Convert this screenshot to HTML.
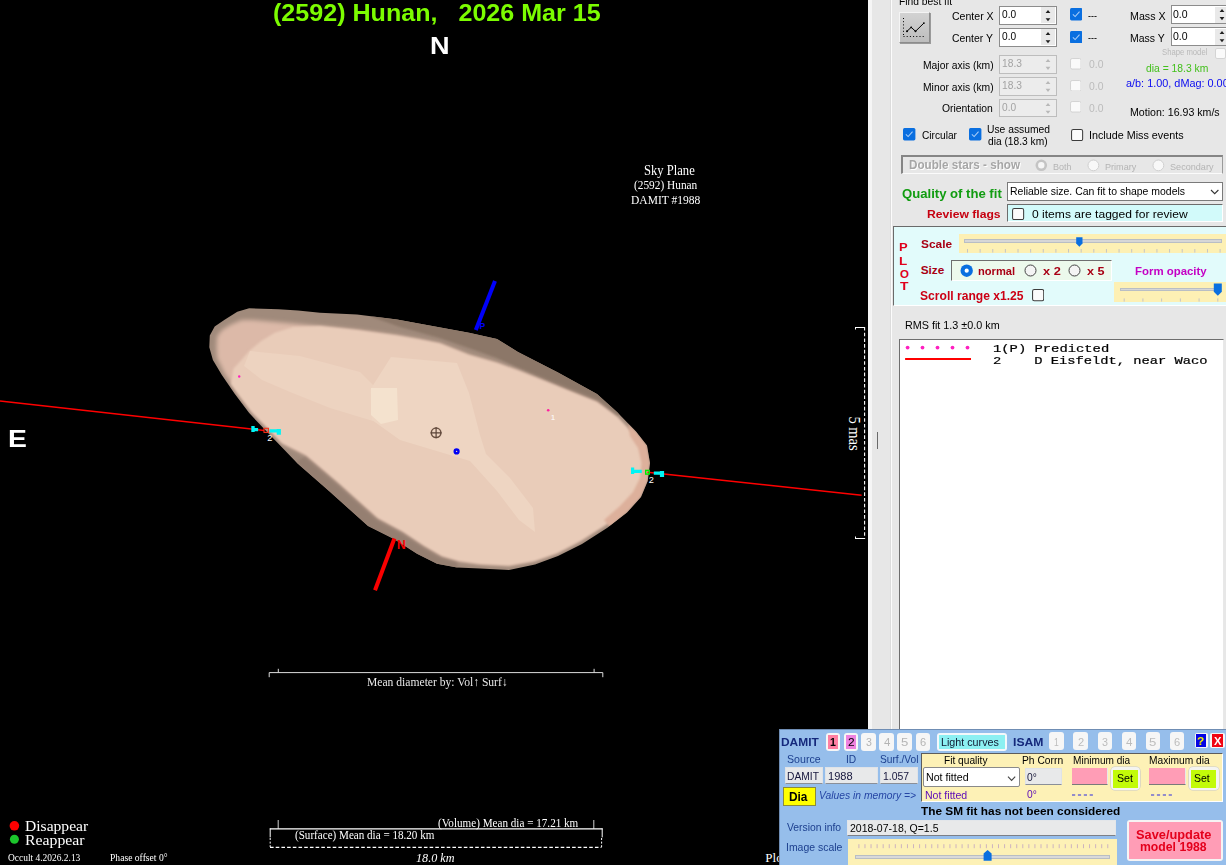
<!DOCTYPE html>
<html>
<head>
<meta charset="utf-8">
<title>Occult - (2592) Hunan</title>
<style>
html,body{margin:0;padding:0;}
body{width:1226px;height:865px;overflow:hidden;position:relative;background:#000;font-family:"Liberation Sans",sans-serif;font-size:12px;color:#000;}
.a{position:absolute;white-space:nowrap;line-height:1;}
.t{position:absolute;white-space:pre;line-height:1;transform-origin:0 50%;}
#plot{position:absolute;left:0;top:0;width:868px;height:865px;background:#000;overflow:hidden;}
#side{position:absolute;left:868px;top:0;width:358px;height:865px;background:#e7e7e7;overflow:hidden;}
#dm{position:absolute;left:779px;top:729px;width:447px;height:136px;background:#96beeb;overflow:hidden;}
.serif{font-family:"Liberation Serif",serif;color:#fff;}
</style>
</head>
<body>

<!-- ================= PLOT AREA ================= -->
<div id="plot">
<svg class="a" style="left:0;top:0" width="868" height="865" viewBox="0 0 868 865">
  <defs>
    <filter id="bl" x="-5%" y="-5%" width="110%" height="110%"><feGaussianBlur stdDeviation="1.2"/></filter>
    <filter id="bl2" x="-5%" y="-5%" width="110%" height="110%"><feGaussianBlur stdDeviation="2"/></filter>
    <clipPath id="cp"><polygon points="209.3,347.2 209.8,335.4 214.7,326.5 224.6,319.7 237.3,311.8 249.1,308.2 278.6,309.3 298,310.6 320,312.8 357,314.6 397,319.5 420,323.8 469,332.8 497,339 518,352 558,372.6 597,394 617,412 636,431.5 647,445.5 650,463 647.7,481 641,497 627,512.6 607,528 582,544 558,556 535,564.6 509,570 480,568.6 457,567.6 437,563.7 417,553.8 394,539 368,526 348.5,508.6 329,491 297.5,463.4 279.7,445 264,428.8 249.2,413.1 234.5,393.4 221.7,374.7 212.9,360"/></clipPath>
  </defs>
  <!-- asteroid outer (rim) -->
  <polygon id="rim" fill="#a08a7b" points="209.3,347.2 209.8,335.4 214.7,326.5 224.6,319.7 237.3,311.8 249.1,308.2 278.6,309.3 298,310.6 320,312.8 357,314.6 397,319.5 420,323.8 469,332.8 497,339 518,352 558,372.6 597,394 617,412 636,431.5 647,445.5 650,463 647.7,481 641,497 627,512.6 607,528 582,544 558,556 535,564.6 509,570 480,568.6 457,567.6 437,563.7 417,553.8 394,539 368,526 348.5,508.6 329,491 297.5,463.4 279.7,445 264,428.8 249.2,413.1 234.5,393.4 221.7,374.7 212.9,360"/>
  <g clip-path="url(#cp)">
  <!-- darker top-right rim -->
  <polygon fill="#8c7768" filter="url(#bl)" points="372,315 400,316 430,320 469,330 497,336 518,349 558,370 597,391 622,412 612,421 590,403 556,385 518,368 497,358 469,348 440,338 400,327 372,317"/>
  <!-- darker lower-left rim -->
  <polygon fill="#957f71" filter="url(#bl)" points="296,462 329,492 348.5,510 368,527 394,540.5 417,555 437,565 457,569 458,559 441,553.5 423,543.5 402,529.5 377,516 358,499 338,481 309,454"/>
  <!-- medium layer (upper-left wedge etc) -->
  <polygon fill="#dcb9a8" filter="url(#bl2)" points="216.5,347 217,336.5 222,330 231,324.5 242,320 253,320 298,324 357,330 397,335.5 420,339.5 440,343.5 469,355 497,363 518,370.6 558,386.6 597,402 617,417 633,434 642,449 645,465 643,481 637,495 624,510 605,525 580,541 557,553 534,561 509,565.5 480,564 459,561 442,556 424,545.5 403,531.5 378,518 359,501 339,483 306,455 282,443 266.5,426.8 251.5,411.5 237,392.3 224.5,373.5 217,358"/>
  <!-- light body -->
  <polygon fill="#e9ccb9" filter="url(#bl)" points="320,326 357,330 397,335.5 420,339.5 440,343.5 469,355 497,363 518,370.6 558,386.6 597,402 617,417 633,434 642,449 645,465 643,481 637,495 624,510 605,525 580,541 557,553 534,561 509,565.5 480,564 459,561 442,556 424,545.5 403,531.5 378,518 359,501 339,483 306,455 282,443 266.5,426.8 251.5,411.5 237,392.3 231,384 233.4,368.8 242.3,359 249.1,351.1 260.9,341.3 274.7,332.8 293.4,327"/>
  <!-- right salmon rim -->
  <polygon fill="#ddb09b" filter="url(#bl)" points="628,424 636,431.5 647,445.5 650,463 647.7,481 641,497 627,512.6 610,527 604,520 620,506 633,492 640,478 641.5,463 638,448 630,436"/>
  <!-- lighter bands -->
  <polygon fill="#edd3c0" points="250,351 300,356 360,372 375,387 373,421 330,408 290,392 262,380 244,366"/>
  <polygon fill="#eed5c2" points="391,357 457,363 469,393 480,435 486,454 510,478 533,508 535,532 519,520 497,491 470,461 440,452 400,440 372,420 370,390"/>
  <!-- bright patch -->
  <polygon fill="#f4e2ce" points="371,388 397,388 398,420 381,424 371,415"/>
  </g>
  <!-- chord lines -->
  <line x1="0" y1="401.1" x2="264" y2="430.4" stroke="#f00" stroke-width="1.5"/>
  <line x1="647.5" y1="472.2" x2="861.6" y2="495.2" stroke="#f00" stroke-width="1.5"/>
  <!-- blue arrow (rotation pole) -->
  <line x1="495" y1="281" x2="475.8" y2="329.9" stroke="#0000fa" stroke-width="4"/>
  <text x="479.6" y="329.4" font-family="Liberation Sans, sans-serif" font-size="8.5" font-weight="bold" fill="#0000fa">P</text>
  <!-- red arrow -->
  <line x1="394.4" y1="538.5" x2="375" y2="590.3" stroke="#fa0000" stroke-width="4"/>
  <text x="397" y="549.4" font-family="Liberation Sans, sans-serif" font-size="12" font-weight="bold" fill="#fa0000">N</text>
  <!-- center crosshair -->
  <circle cx="436.1" cy="432.8" r="4.8" fill="none" stroke="#6b5243" stroke-width="1.5"/>
  <path d="M430.6 432.8 h11 M436.1 427.3 v11" stroke="#5b4438" stroke-width="1.2"/>
  <!-- centre of mass dot -->
  <circle cx="456.6" cy="451.4" r="1.9" fill="none" stroke="#0000f4" stroke-width="2.4"/>
  <!-- predicted dots -->
  <circle cx="239.2" cy="376.5" r="1.2" fill="#ff20c0"/>
  <circle cx="548.2" cy="410.3" r="1.3" fill="#ff20a0"/>
  <text x="550.8" y="420" font-family="Liberation Sans, sans-serif" font-size="8" fill="#fff">1</text>
  <!-- left chord end markers -->
  <path d="M251.3 426 h3.4 v2 h3.4 v3.2 h-3.4 v0.9 h-3.4 z" fill="#00f4f4"/>
  <path d="M269.6 429.2 h7.1 v-0.2 h4.2 v5.8 h-4.2 v-2.2 h-7.1 z" fill="#00f4f4"/>
  <rect x="264" y="428.3" width="4.4" height="4.1" fill="none" stroke="#f83018" stroke-width="1.1"/>
  <text x="267.2" y="440.9" font-family="Liberation Sans, sans-serif" font-size="9.2" fill="#fff">2</text>
  <!-- right chord end markers -->
  <path d="M631 467.5 h3.2 v2.2 h7.6 v3.4 h-7.6 v1 h-3.2 z" fill="#00f4f4"/>
  <path d="M653.8 471.6 h6.1 v-0.7 h4.2 v6.1 h-4.2 v-2.2 h-6.1 z" fill="#00f4f4"/>
  <rect x="645.7" y="470.4" width="3.6" height="3.7" fill="none" stroke="#00ee00" stroke-width="1.4"/>
  <text x="648.7" y="482.9" font-family="Liberation Sans, sans-serif" font-size="9.2" fill="#fff">2</text>
  <!-- 5 mas scale bar -->
  <path d="M855 327.5 h9.5 M855.5 327 v2.5 M855 538.5 h9.5 M855.5 536.5 v2.5" stroke="#fff" stroke-width="1" fill="none"/>
  <path d="M864.6 327 v212" stroke="#fff" stroke-width="1.1" stroke-dasharray="3.6 2.1"/>
  <text transform="translate(848.8,416.4) rotate(90) scale(0.875,1)" font-family="Liberation Serif, serif" font-size="16.6" fill="#fff">5 mas</text>
  <!-- mean diameter bar -->
  <path d="M269.2 677.2 v-4.6 h333.6 v4.6" stroke="#dcdcdc" stroke-width="1" fill="none"/>
  <path d="M278.3 672.6 v-3.8 M594.1 672.6 v-3.8" stroke="#dcdcdc" stroke-width="1"/>
  <!-- bottom bars -->
  <path d="M278.2 820 v8.8 M593.8 820 v8.8" stroke="#d0d0d0" stroke-width="1"/>
  <path d="M269.8 828.9 h332.8" stroke="#fff" stroke-width="1.1"/>
  <path d="M270.2 828.4 v9 M602.2 828.4 v9" stroke="#fff" stroke-width="1"/>
  <path d="M270.2 838 v9 M601.6 838 v9" stroke="#fff" stroke-width="1" stroke-dasharray="2 1.6"/>
  <path d="M270 847.4 h331.5" stroke="#fff" stroke-width="1.1" stroke-dasharray="3.6 2.1"/>
  <!-- legend dots -->
  <circle cx="14.4" cy="825.8" r="4.8" fill="#ff0000"/>
  <circle cx="14.4" cy="839.3" r="4.5" fill="#1cc62c"/>
</svg>
<div class="t" style="left:272.5px;top:2px;font-size:23.2px;font-weight:bold;color:#7cfc00;white-space:pre;transform:scaleX(1.082);">(2592) Hunan,   2026 Mar 15</div>
<div class="t" style="left:429.5px;top:34.5px;font-size:23px;font-weight:bold;color:#fff;transform:scaleX(1.18);">N</div>
<div class="t" style="left:7.5px;top:427.4px;font-size:24.6px;font-weight:bold;color:#fff;transform:scaleX(1.15);">E</div>
<!--PT-BEGIN-->
<div class="t" style="left:644.37px;top:164.11px;font-size:13.6px;font-family:'Liberation Serif',serif;color:#fff;transform:scaleX(0.9264);">Sky Plane</div>
<div class="t" style="left:634.30px;top:178.85px;font-size:12.6px;font-family:'Liberation Serif',serif;color:#fff;transform:scaleX(0.9000);">(2592) Hunan</div>
<div class="t" style="left:630.60px;top:193.98px;font-size:12.8px;font-family:'Liberation Serif',serif;color:#fff;transform:scaleX(0.9000);">DAMIT #1988</div>
<div class="t" style="left:366.73px;top:676.15px;font-size:12px;font-family:'Liberation Serif',serif;color:#e8e8e8;transform:scaleX(0.9664);">Mean diameter by: Vol↑ Surf↓</div>
<div class="t" style="left:25.20px;top:818.81px;font-size:14.2px;font-family:'Liberation Serif',serif;color:#fff;transform:scaleX(1.0982);">Disappear</div>
<div class="t" style="left:25.19px;top:832.61px;font-size:14.2px;font-family:'Liberation Serif',serif;color:#fff;transform:scaleX(1.1113);">Reappear</div>
<div class="t" style="left:7.50px;top:852.44px;font-size:10.7px;font-family:'Liberation Serif',serif;color:#fff;transform:scaleX(0.8829);">Occult 4.2026.2.13</div>
<div class="t" style="left:110.20px;top:852.44px;font-size:10.7px;font-family:'Liberation Serif',serif;color:#fff;transform:scaleX(0.8984);">Phase offset 0°</div>
<div class="t" style="left:438.10px;top:816.55px;font-size:12px;font-family:'Liberation Serif',serif;color:#fff;transform:scaleX(0.9278);">(Volume) Mean dia = 17.21 km</div>
<div class="t" style="left:295.40px;top:829.25px;font-size:12px;font-family:'Liberation Serif',serif;color:#fff;transform:scaleX(0.9245);">(Surface) Mean dia = 18.20 km</div>
<div class="t" style="left:416.46px;top:850.91px;font-size:13px;font-family:'Liberation Serif',serif;font-style:italic;color:#fff;transform:scaleX(0.9350);">18.0 km</div>
<div class="t" style="left:765.30px;top:850.91px;font-size:13px;font-family:'Liberation Serif',serif;color:#fff;transform:scaleX(1.0000);">Plot</div>
<!--PT-END-->
</div>

<!-- ================= SIDE PANEL ================= -->
<div id="side"></div>
<!--SIDE-BEGIN-->
<div class="a" style="left:868px;top:0px;width:3.5px;height:865.0px;background:#f6f6f6;"></div>
<div class="a" style="left:876.5px;top:432px;width:1.0px;height:17.0px;background:#6a6a6a;"></div>
<div class="a" style="left:890px;top:0px;width:1.0px;height:865.0px;background:#dcdcdc;"></div>
<div class="a" style="left:891px;top:0px;width:1.0px;height:865.0px;background:#fcfcfc;"></div>
<div class="a" style="left:898.6px;top:11.8px;width:31.8px;height:31.2px;background:linear-gradient(180deg,#d2d2d2,#bdbdbd);border:1px solid;border-color:#f4f4f4 #8c8c8c #8c8c8c #f4f4f4;box-sizing:border-box;box-shadow:1px 1px 0 #9a9a9a;"></div>
<svg class="a" style="left:898px;top:11px" width="33" height="32" viewBox="0 0 33 32">
<path d="M5.5 7 v19 M5.5 25.5 h22" stroke="#000" stroke-width="1" stroke-dasharray="1 2.2" fill="none"/>
<path d="M9 20.3 l4.2 -4 l4.3 4 l8.4 -8.2" stroke="#000" stroke-width="1" fill="none"/>
<circle cx="9" cy="20.3" r="1"/><circle cx="13.2" cy="16.3" r="0.9"/><circle cx="17.5" cy="20.3" r="1"/><circle cx="25.9" cy="12.1" r="0.9"/>
</svg>
<div class="a" style="left:999.3px;top:5.5px;width:57.4px;height:19.1px;background:#fff;border:1px solid #8c8c8c;box-sizing:border-box;"></div>
<div class="a" style="left:1041.2px;top:7.0px;width:14.0px;height:16.1px;background:#e9e9e9;"></div>
<svg class="a" style="left:1041.2px;top:5.5px" width="14" height="19.1" viewBox="0 0 14 19.1"><path d="M4.6 7 L7 3.9 L9.4 7 Z M4.6 12.2 L7 15.3 L9.4 12.2 Z" fill="#202020"/></svg>
<div class="a" style="left:999.3px;top:27.5px;width:57.4px;height:19.1px;background:#fff;border:1px solid #8c8c8c;box-sizing:border-box;"></div>
<div class="a" style="left:1041.2px;top:29.0px;width:14.0px;height:16.1px;background:#e9e9e9;"></div>
<svg class="a" style="left:1041.2px;top:27.5px" width="14" height="19.1" viewBox="0 0 14 19.1"><path d="M4.6 7 L7 3.9 L9.4 7 Z M4.6 12.2 L7 15.3 L9.4 12.2 Z" fill="#202020"/></svg>
<div class="a" style="left:999.3px;top:55px;width:57.4px;height:18.7px;background:#ececec;border:1px solid #bdbdbd;box-sizing:border-box;"></div>
<svg class="a" style="left:1041.2px;top:55px" width="14" height="18.7" viewBox="0 0 14 18.7"><path d="M4.6 7 L7 3.9 L9.4 7 Z M4.6 11.8 L7 14.9 L9.4 11.8 Z" fill="#b8b8b8"/></svg>
<div class="a" style="left:999.3px;top:77px;width:57.4px;height:18.7px;background:#ececec;border:1px solid #bdbdbd;box-sizing:border-box;"></div>
<svg class="a" style="left:1041.2px;top:77px" width="14" height="18.7" viewBox="0 0 14 18.7"><path d="M4.6 7 L7 3.9 L9.4 7 Z M4.6 11.8 L7 14.9 L9.4 11.8 Z" fill="#b8b8b8"/></svg>
<div class="a" style="left:999.3px;top:98.9px;width:57.4px;height:18.6px;background:#ececec;border:1px solid #bdbdbd;box-sizing:border-box;"></div>
<svg class="a" style="left:1041.2px;top:98.9px" width="14" height="18.6" viewBox="0 0 14 18.6"><path d="M4.6 7 L7 3.9 L9.4 7 Z M4.6 11.7 L7 14.8 L9.4 11.7 Z" fill="#b8b8b8"/></svg>
<div class="a" style="left:1170.9px;top:5.4px;width:59.1px;height:19.0px;background:#fff;border:1px solid #8c8c8c;box-sizing:border-box;"></div>
<div class="a" style="left:1214.5px;top:6.9px;width:14.0px;height:16.0px;background:#e9e9e9;"></div>
<svg class="a" style="left:1214.5px;top:5.4px" width="14" height="19.0" viewBox="0 0 14 19.0"><path d="M4.6 7 L7 3.9 L9.4 7 Z M4.6 12.1 L7 15.2 L9.4 12.1 Z" fill="#202020"/></svg>
<div class="a" style="left:1170.9px;top:27.2px;width:59.1px;height:19.1px;background:#fff;border:1px solid #8c8c8c;box-sizing:border-box;"></div>
<div class="a" style="left:1214.5px;top:28.7px;width:14.0px;height:16.1px;background:#e9e9e9;"></div>
<svg class="a" style="left:1214.5px;top:27.2px" width="14" height="19.1" viewBox="0 0 14 19.1"><path d="M4.6 7 L7 3.9 L9.4 7 Z M4.6 12.2 L7 15.3 L9.4 12.2 Z" fill="#202020"/></svg>
<svg class="a" style="left:1069.5px;top:8.3px" width="12.4" height="12.4" viewBox="0 0 13 13"><rect x="0" y="0" width="13" height="13" rx="1.6" fill="#0a6fe0"/><path d="M3 6.7 L5.4 9 L10 3.8" stroke="#a9cdf8" stroke-width="1.1" fill="none"/></svg>
<svg class="a" style="left:1069.5px;top:30.5px" width="12.4" height="12.4" viewBox="0 0 13 13"><rect x="0" y="0" width="13" height="13" rx="1.6" fill="#0a6fe0"/><path d="M3 6.7 L5.4 9 L10 3.8" stroke="#a9cdf8" stroke-width="1.1" fill="none"/></svg>
<svg class="a" style="left:1069.6px;top:58.2px" width="11.6" height="11.6" viewBox="0 0 13 13"><rect x="0.6" y="0.6" width="11.8" height="11.8" rx="1.8" fill="#fafafa" stroke="#d2d2d2" stroke-width="1.1"/></svg>
<svg class="a" style="left:1069.6px;top:79.8px" width="11.6" height="11.6" viewBox="0 0 13 13"><rect x="0.6" y="0.6" width="11.8" height="11.8" rx="1.8" fill="#fafafa" stroke="#d2d2d2" stroke-width="1.1"/></svg>
<svg class="a" style="left:1069.6px;top:101.4px" width="11.6" height="11.6" viewBox="0 0 13 13"><rect x="0.6" y="0.6" width="11.8" height="11.8" rx="1.8" fill="#fafafa" stroke="#d2d2d2" stroke-width="1.1"/></svg>
<svg class="a" style="left:1215.2px;top:48.1px" width="11" height="11" viewBox="0 0 13 13"><rect x="0.6" y="0.6" width="11.8" height="11.8" rx="1.8" fill="#fafafa" stroke="#d2d2d2" stroke-width="1.1"/></svg>
<svg class="a" style="left:903.4px;top:128.2px" width="12.4" height="12.4" viewBox="0 0 13 13"><rect x="0" y="0" width="13" height="13" rx="1.6" fill="#0a6fe0"/><path d="M3 6.7 L5.4 9 L10 3.8" stroke="#a9cdf8" stroke-width="1.1" fill="none"/></svg>
<svg class="a" style="left:969.2px;top:128.2px" width="12.4" height="12.4" viewBox="0 0 13 13"><rect x="0" y="0" width="13" height="13" rx="1.6" fill="#0a6fe0"/><path d="M3 6.7 L5.4 9 L10 3.8" stroke="#a9cdf8" stroke-width="1.1" fill="none"/></svg>
<svg class="a" style="left:1071.4px;top:128.5px" width="12.2" height="12.2" viewBox="0 0 13 13"><rect x="0.6" y="0.6" width="11.8" height="11.8" rx="1.8" fill="#fbfbfb" stroke="#3c3c3c" stroke-width="1.1"/></svg>
<div class="a" style="left:901.4px;top:155.3px;width:321.6px;height:18.7px;border:2px solid;border-color:#858585 #9a9a9a #fbfbfb #858585;border-right-width:1px;border-bottom-width:1px;box-sizing:border-box;"></div>
<svg class="a" style="left:1035.1000000000001px;top:159.1px" width="12.6" height="12.6" viewBox="0 0 12.6 12.6"><circle cx="6.3" cy="6.3" r="4.5" fill="#f6f6f6" stroke="#c4c4c4" stroke-width="2.6"/></svg>
<svg class="a" style="left:1086.8999999999999px;top:158.9px" width="12.8" height="12.8" viewBox="0 0 12.8 12.8"><circle cx="6.4" cy="6.4" r="5.4" fill="#f8f8f8" stroke="#cfcfcf" stroke-width="1"/></svg>
<svg class="a" style="left:1152.1px;top:158.9px" width="12.8" height="12.8" viewBox="0 0 12.8 12.8"><circle cx="6.4" cy="6.4" r="5.4" fill="#f8f8f8" stroke="#cfcfcf" stroke-width="1"/></svg>
<div class="a" style="left:1007px;top:181.8px;width:216.4px;height:19.4px;background:#fff;border:1px solid #7a7a7a;box-sizing:border-box;"></div>
<svg class="a" style="left:1209px;top:187px" width="12" height="10" viewBox="0 0 12 10"><path d="M2 3 L5.7 6.7 L9.4 3" stroke="#333" stroke-width="1.1" fill="none"/></svg>
<div class="a" style="left:1007.4px;top:204px;width:215.6px;height:18.2px;background:#d2fafa;border-top:1.6px solid #6c6c6c;border-left:1.8px solid #6c6c6c;border-bottom:1px solid #fff;border-right:1px solid #fff;box-sizing:border-box;"></div>
<div class="a" style="left:893px;top:225.7px;width:337.0px;height:80.7px;background:#e2fbfb;border-top:1.6px solid #6a6a6a;border-left:1.8px solid #6a6a6a;border-bottom:1px solid #fff;box-sizing:border-box;"></div>
<div class="a" style="left:958.8px;top:234.2px;width:267.2px;height:18.4px;background:#fdf0b4;"></div>
<div class="a" style="left:964.3px;top:239.4px;width:257.7px;height:3.6px;background:#d6d6d6;border:0.7px solid #b9bec4;box-sizing:border-box;"></div>
<svg class="a" style="left:958.8px;top:234.2px" width="267" height="19" viewBox="0 0 267 19"><path d="M8.50 15 v3.6 M21.13 15 v3.6 M33.76 15 v3.6 M46.39 15 v3.6 M59.02 15 v3.6 M71.65 15 v3.6 M84.28 15 v3.6 M96.91 15 v3.6 M109.54 15 v3.6 M122.17 15 v3.6 M134.80 15 v3.6 M147.43 15 v3.6 M160.06 15 v3.6 M172.69 15 v3.6 M185.32 15 v3.6 M197.95 15 v3.6 M210.58 15 v3.6 M223.21 15 v3.6 M235.84 15 v3.6 M248.47 15 v3.6 M261.10 15 v3.6 " stroke="#c4c4c4" stroke-width="1"/><path d="M117.2 3.2 h6.3 v6.4 l-3.15 3.1 l-3.15 -3.1 z" fill="#0a6fe0"/></svg>
<div class="a" style="left:950.6px;top:260.2px;width:161.7px;height:21.1px;background:#ecf9ec;border:1.6px solid;border-color:#6e6e6e #fff #fff #6e6e6e;box-sizing:border-box;"></div>
<svg class="a" style="left:959.6999999999999px;top:263.90000000000003px" width="13.4" height="13.4" viewBox="0 0 13.4 13.4"><circle cx="6.7" cy="6.7" r="6.2" fill="#0a6fe0"/><circle cx="6.7" cy="6.7" r="2.1" fill="#fff"/></svg>
<svg class="a" style="left:1024.0px;top:264.1px" width="13" height="13" viewBox="0 0 13 13"><circle cx="6.5" cy="6.5" r="5.5" fill="#f4f4f4" stroke="#444" stroke-width="1"/></svg>
<svg class="a" style="left:1067.9px;top:264.1px" width="13" height="13" viewBox="0 0 13 13"><circle cx="6.5" cy="6.5" r="5.5" fill="#f4f4f4" stroke="#444" stroke-width="1"/></svg>
<div class="a" style="left:1114.3px;top:282.4px;width:111.7px;height:19.9px;background:#fdf0b4;"></div>
<div class="a" style="left:1120px;top:288.2px;width:96.0px;height:3.3px;background:#d6d6d6;border:0.7px solid #b9bec4;box-sizing:border-box;"></div>
<svg class="a" style="left:1114.3px;top:282.4px" width="112" height="20" viewBox="0 0 112 20"><path d="M10.20 16.4 v3.2 M28.92 16.4 v3.2 M47.64 16.4 v3.2 M66.36 16.4 v3.2 M85.08 16.4 v3.2 M103.80 16.4 v3.2 " stroke="#c4c4c4" stroke-width="1"/><path d="M99.8 1.4 h8 v8.4 l-4 4 l-4 -4 z" fill="#0a6fe0"/></svg>
<svg class="a" style="left:1012.4px;top:207.6px" width="12.2" height="12.2" viewBox="0 0 13 13"><rect x="0.6" y="0.6" width="11.8" height="11.8" rx="1.8" fill="#fbfbfb" stroke="#3c3c3c" stroke-width="1.1"/></svg>
<svg class="a" style="left:1032.1px;top:289.4px" width="12.3" height="12.3" viewBox="0 0 13 13"><rect x="0.6" y="0.6" width="11.8" height="11.8" rx="1.8" fill="#fbfbfb" stroke="#3c3c3c" stroke-width="1.1"/></svg>
<div class="a" style="left:898.7px;top:339.2px;width:325.7px;height:389.8px;background:#fff;border-top:1.8px solid #6e6e6e;border-left:1.8px solid #6e6e6e;border-right:1px solid #e8e8e8;box-sizing:border-box;"></div>
<svg class="a" style="left:900px;top:340px" width="80" height="24" viewBox="0 0 80 24"><circle cx="7.6" cy="7.6" r="1.9" fill="#ff20c0"/><circle cx="22.5" cy="7.6" r="1.9" fill="#ff20c0"/><circle cx="37.5" cy="7.6" r="1.9" fill="#ff20c0"/><circle cx="52.5" cy="7.6" r="1.9" fill="#ff20c0"/><circle cx="67.5" cy="7.6" r="1.9" fill="#ff20c0"/><path d="M5.1 19 h65.9" stroke="#f00" stroke-width="2.2"/></svg>
<div class="t" style="left:898.51px;top:-3.93px;font-size:11.5px;transform:scaleX(0.8932);">Find best fit</div>
<div class="t" style="left:951.50px;top:11.07px;font-size:11.5px;transform:scaleX(0.9178);">Center X</div>
<div class="t" style="left:951.50px;top:33.07px;font-size:11.5px;transform:scaleX(0.9044);">Center Y</div>
<div class="t" style="left:922.70px;top:60.17px;font-size:11.5px;transform:scaleX(0.8987);">Major axis (km)</div>
<div class="t" style="left:922.70px;top:82.17px;font-size:11.5px;transform:scaleX(0.8987);">Minor axis (km)</div>
<div class="t" style="left:941.70px;top:103.37px;font-size:11.5px;transform:scaleX(0.9018);">Orientation</div>
<div class="t" style="left:1001.70px;top:8.57px;font-size:11.5px;transform:scaleX(0.8812);">0.0</div>
<div class="t" style="left:1001.70px;top:30.67px;font-size:11.5px;transform:scaleX(0.8812);">0.0</div>
<div class="t" style="left:1001.71px;top:57.67px;font-size:11.5px;color:#a3a3a3;transform:scaleX(0.8905);">18.3</div>
<div class="t" style="left:1001.71px;top:80.27px;font-size:11.5px;color:#a3a3a3;transform:scaleX(0.8905);">18.3</div>
<div class="t" style="left:1001.70px;top:102.47px;font-size:11.5px;color:#a3a3a3;transform:scaleX(0.8812);">0.0</div>
<div class="t" style="left:1088.10px;top:10.27px;font-size:11.5px;transform:scaleX(0.7727);">---</div>
<div class="t" style="left:1088.10px;top:32.07px;font-size:11.5px;transform:scaleX(0.7727);">---</div>
<div class="t" style="left:1088.50px;top:59.27px;font-size:11.5px;color:#bcbcbc;transform:scaleX(0.9000);">0.0</div>
<div class="t" style="left:1088.50px;top:81.27px;font-size:11.5px;color:#bcbcbc;transform:scaleX(0.9000);">0.0</div>
<div class="t" style="left:1088.50px;top:103.27px;font-size:11.5px;color:#bcbcbc;transform:scaleX(0.9000);">0.0</div>
<div class="t" style="left:1129.57px;top:10.57px;font-size:11.5px;transform:scaleX(0.9270);">Mass X</div>
<div class="t" style="left:1129.59px;top:33.37px;font-size:11.5px;transform:scaleX(0.9108);">Mass Y</div>
<div class="t" style="left:1173.30px;top:9.27px;font-size:11.5px;transform:scaleX(0.9125);">0.0</div>
<div class="t" style="left:1173.30px;top:30.97px;font-size:11.5px;transform:scaleX(0.9125);">0.0</div>
<div class="t" style="left:1162.30px;top:47.92px;font-size:8.6px;color:#b9b9b9;transform:scaleX(0.8959);">Shape model</div>
<div class="t" style="left:1145.50px;top:62.67px;font-size:11.5px;color:#43c01c;transform:scaleX(0.8986);">dia = 18.3 km</div>
<div class="t" style="left:1126.30px;top:78.27px;font-size:11.5px;color:#0a0af0;transform:scaleX(0.9450);">a/b: 1.00, dMag: 0.00</div>
<div class="t" style="left:1129.58px;top:107.47px;font-size:11.5px;transform:scaleX(0.9229);">Motion: 16.93 km/s</div>
<div class="t" style="left:921.50px;top:130.31px;font-size:11.8px;transform:scaleX(0.8610);">Circular</div>
<div class="t" style="left:987.39px;top:124.23px;font-size:11.3px;transform:scaleX(0.9132);">Use assumed</div>
<div class="t" style="left:988.30px;top:136.43px;font-size:11.3px;transform:scaleX(0.9030);">dia (18.3 km)</div>
<div class="t" style="left:1089.19px;top:130.31px;font-size:11.8px;transform:scaleX(0.9127);">Include Miss events</div>
<div class="t" style="left:908.96px;top:158.60px;font-size:12.4px;font-weight:bold;color:#a6a6a6;text-shadow:1px 1px 0 #fff;transform:scaleX(0.9436);">Double stars - show</div>
<div class="t" style="left:1052.62px;top:163.01px;font-size:9.2px;color:#b4b4b4;transform:scaleX(0.9833);">Both</div>
<div class="t" style="left:1104.51px;top:163.01px;font-size:9.2px;color:#b4b4b4;transform:scaleX(0.9871);">Primary</div>
<div class="t" style="left:1169.71px;top:163.01px;font-size:9.2px;color:#b4b4b4;transform:scaleX(0.9907);">Secondary</div>
<div class="t" style="left:901.80px;top:188.13px;font-size:12.6px;font-weight:bold;color:#119c11;transform:scaleX(1.0406);">Quality of the fit</div>
<div class="t" style="left:1009.59px;top:186.37px;font-size:11.5px;transform:scaleX(0.9099);">Reliable size. Can fit to shape models</div>
<div class="t" style="left:926.57px;top:208.81px;font-size:11.8px;font-weight:bold;color:#c60010;transform:scaleX(1.0300);">Review flags</div>
<div class="t" style="left:1031.50px;top:208.08px;font-size:11.6px;transform:scaleX(1.0413);">0 items are tagged for review</div>
<div class="t" style="left:899.27px;top:242.47px;font-size:11.5px;font-weight:bold;color:#e0001c;transform:scaleX(1.1286);">P</div>
<div class="t" style="left:899.43px;top:256.27px;font-size:11.5px;font-weight:bold;color:#e0001c;transform:scaleX(1.1667);">L</div>
<div class="t" style="left:900.00px;top:269.17px;font-size:11.5px;font-weight:bold;color:#e0001c;transform:scaleX(1.0000);">O</div>
<div class="t" style="left:900.20px;top:280.77px;font-size:11.5px;font-weight:bold;color:#e0001c;transform:scaleX(1.2000);">T</div>
<div class="t" style="left:920.70px;top:238.91px;font-size:11.8px;font-weight:bold;color:#a80014;transform:scaleX(1.0065);">Scale</div>
<div class="t" style="left:920.70px;top:264.91px;font-size:11.8px;font-weight:bold;color:#a80014;transform:scaleX(1.0000);">Size</div>
<div class="t" style="left:978.16px;top:265.71px;font-size:11.8px;font-weight:bold;color:#a80014;transform:scaleX(0.9447);">normal</div>
<div class="t" style="left:1042.90px;top:265.71px;font-size:11.8px;font-weight:bold;color:#a80014;transform:scaleX(1.0812);">x 2</div>
<div class="t" style="left:1086.80px;top:265.71px;font-size:11.8px;font-weight:bold;color:#a80014;transform:scaleX(1.0688);">x 5</div>
<div class="t" style="left:1135.11px;top:265.97px;font-size:11.5px;font-weight:bold;color:#c400c4;transform:scaleX(0.9930);">Form opacity</div>
<div class="t" style="left:920.49px;top:290.14px;font-size:12px;font-weight:bold;color:#cc0014;transform:scaleX(1.0078);">Scroll range x1.25</div>
<div class="t" style="left:905.25px;top:320.05px;font-size:11.4px;transform:scaleX(0.9469);">RMS fit 1.3 ±0.0 km</div>
<div class="t" style="left:993.36px;top:341.71px;font-size:13.3px;font-family:'Liberation Mono',monospace;-webkit-text-stroke:0.25px #000;transform-origin:0 10.19px;transform:scale(1.0400,0.86);">1(P) Predicted</div>
<div class="t" style="left:993.37px;top:353.81px;font-size:13.3px;font-family:'Liberation Mono',monospace;-webkit-text-stroke:0.25px #000;transform-origin:0 10.19px;transform:scale(1.0345,0.86);">2    D Eisfeldt, near Waco</div>
<!--SIDE-END-->

<!-- ================= DAMIT PANEL ================= -->
<div id="dm"></div>
<!--DM-BEGIN-->
<div class="a" style="left:779px;top:729px;width:447.0px;height:1.3px;background:#6f8db4;"></div>
<div class="a" style="left:779px;top:729px;width:1.3px;height:136.0px;background:#6f8db4;"></div>
<div class="a" style="left:825.6999999999999px;top:733px;width:14.4px;height:17.6px;background:#f6f6f6;border-radius:3px;"></div>
<div class="a" style="left:827.6999999999999px;top:735px;width:10.4px;height:13.6px;background:#ff7fa2;"></div>
<div class="a" style="left:843.8px;top:733px;width:14.4px;height:17.6px;background:#f6f6f6;border-radius:3px;"></div>
<div class="a" style="left:845.8px;top:735px;width:10.4px;height:13.6px;background:#ee82e0;"></div>
<div class="a" style="left:861.4px;top:733px;width:14.4px;height:17.6px;background:#f6f6f6;border-radius:3px;"></div>
<div class="a" style="left:879.3px;top:733px;width:14.4px;height:17.6px;background:#f6f6f6;border-radius:3px;"></div>
<div class="a" style="left:897.4px;top:733px;width:14.4px;height:17.6px;background:#f6f6f6;border-radius:3px;"></div>
<div class="a" style="left:915.5999999999999px;top:733px;width:14.4px;height:17.6px;background:#f6f6f6;border-radius:3px;"></div>
<div class="a" style="left:1049.2px;top:732.4px;width:14.6px;height:18.0px;background:#f6f6f6;border-radius:3px;"></div>
<div class="a" style="left:1073.3px;top:732.4px;width:14.6px;height:18.0px;background:#f6f6f6;border-radius:3px;"></div>
<div class="a" style="left:1097.5px;top:732.4px;width:14.6px;height:18.0px;background:#f6f6f6;border-radius:3px;"></div>
<div class="a" style="left:1121.8px;top:732.4px;width:14.6px;height:18.0px;background:#f6f6f6;border-radius:3px;"></div>
<div class="a" style="left:1145.8px;top:732.4px;width:14.6px;height:18.0px;background:#f6f6f6;border-radius:3px;"></div>
<div class="a" style="left:1169.5px;top:732.4px;width:14.6px;height:18.0px;background:#f6f6f6;border-radius:3px;"></div>
<div class="a" style="left:936.7px;top:733px;width:70.3px;height:18.3px;background:#f4f8fb;border-radius:3px;"></div>
<div class="a" style="left:938.7px;top:735px;width:66.3px;height:14.3px;background:#8cf0f2;"></div>
<div class="a" style="left:1194.6px;top:732.8px;width:13.0px;height:15.6px;background:#f6f6f6;border-radius:2px;"></div>
<div class="a" style="left:1196.3px;top:734.4px;width:9.7px;height:12.4px;background:#0404e4;"></div>
<div class="a" style="left:1210px;top:732.8px;width:14.6px;height:15.6px;background:#f6f6f6;border-radius:2px;"></div>
<div class="a" style="left:1211.6px;top:734.4px;width:11.4px;height:12.4px;background:#f00414;"></div>
<div class="a" style="left:784.9px;top:766.7px;width:38.0px;height:17.6px;background:#e8e9ea;border:1px solid;border-color:#dfe3e8 #dfe3e8 #8a8f98 #dfe3e8;box-sizing:border-box;"></div>
<div class="a" style="left:825.4px;top:766.7px;width:52.9px;height:17.6px;background:#e8e9ea;border:1px solid;border-color:#dfe3e8 #dfe3e8 #8a8f98 #dfe3e8;box-sizing:border-box;"></div>
<div class="a" style="left:880.4px;top:766.7px;width:38.0px;height:17.6px;background:#e8e9ea;border:1px solid;border-color:#dfe3e8 #dfe3e8 #8a8f98 #dfe3e8;box-sizing:border-box;"></div>
<div class="a" style="left:921.2px;top:752.8px;width:301.4px;height:48.8px;background:#fdf1b6;border-top:1.4px solid #5c5c5c;border-left:1.6px solid #5c5c5c;border-bottom:1.2px solid #fff;border-right:1px solid #fff;box-sizing:border-box;"></div>
<div class="a" style="left:923.3px;top:767.4px;width:96.3px;height:19.9px;background:#fff;border:1px solid #8a8a8a;border-radius:2px;box-sizing:border-box;"></div>
<svg class="a" style="left:1005.5px;top:773.5px" width="12" height="10" viewBox="0 0 12 10"><path d="M2 2.6 L5.6 6.4 L9.2 2.6" stroke="#444" stroke-width="1.1" fill="none"/></svg>
<div class="a" style="left:1024.7px;top:767.9px;width:37.7px;height:17.1px;background:#e8e9ea;border:1px solid;border-color:#dfe3e8 #dfe3e8 #8a8f98 #dfe3e8;box-sizing:border-box;"></div>
<div class="a" style="left:1071.7px;top:768.4px;width:36.2px;height:17.0px;background:#ff9db6;border-bottom:1.2px solid #7a7a7a;border-right:1px solid #e8e8e8;box-sizing:border-box;"></div>
<div class="a" style="left:1149.3px;top:768.4px;width:36.6px;height:17.0px;background:#ff9db6;border-bottom:1.2px solid #7a7a7a;border-right:1px solid #e8e8e8;box-sizing:border-box;"></div>
<div class="a" style="left:1110.5px;top:767.4px;width:29.9px;height:22.8px;background:#f4f4f0;border-radius:4px;box-shadow:0 0 0 0.6px #c9c9c9;"></div>
<div class="a" style="left:1112.9px;top:770px;width:25.1px;height:18.0px;background:#c2fb08;"></div>
<div class="a" style="left:1188.5px;top:767.4px;width:30.1px;height:22.8px;background:#f4f4f0;border-radius:4px;box-shadow:0 0 0 0.6px #c9c9c9;"></div>
<div class="a" style="left:1190.9px;top:770px;width:25.3px;height:18.0px;background:#c2fb08;"></div>
<svg class="a" style="left:1072.1px;top:794.4px" width="24" height="3" viewBox="0 0 24 3"><path d="M0.0 1 h3.2 M5.9 1 h3.2 M11.8 1 h3.2 M17.7 1 h3.2 " stroke="#2a2ae0" stroke-width="1.1"/></svg>
<svg class="a" style="left:1151.4px;top:794.4px" width="24" height="3" viewBox="0 0 24 3"><path d="M0.0 1 h3.2 M5.9 1 h3.2 M11.8 1 h3.2 M17.7 1 h3.2 " stroke="#2a2ae0" stroke-width="1.1"/></svg>
<div class="a" style="left:782.8px;top:786.8px;width:32.8px;height:19.2px;background:#ffff00;border:1px solid #8c8c38;box-sizing:border-box;"></div>
<div class="a" style="left:847.2px;top:820px;width:269.1px;height:16.4px;background:#e8e9ea;border:1px solid;border-color:#e3e6ea #e3e6ea #7c8088 #e3e6ea;box-sizing:border-box;"></div>
<div class="a" style="left:847.6px;top:839.2px;width:269.4px;height:25.8px;background:#fdf1b6;"></div>
<div class="a" style="left:854.5px;top:855.3px;width:255.2px;height:3.9px;background:#d9d9d9;border:0.7px solid #b9bec4;box-sizing:border-box;"></div>
<svg class="a" style="left:847.6px;top:839.2px" width="270" height="26" viewBox="0 0 270 26"><path d="M10.90 5.2 v4 M16.97 5.2 v4 M23.04 5.2 v4 M29.11 5.2 v4 M35.18 5.2 v4 M41.25 5.2 v4 M47.32 5.2 v4 M53.39 5.2 v4 M59.46 5.2 v4 M65.53 5.2 v4 M71.60 5.2 v4 M77.67 5.2 v4 M83.74 5.2 v4 M89.81 5.2 v4 M95.88 5.2 v4 M101.95 5.2 v4 M108.02 5.2 v4 M114.09 5.2 v4 M120.16 5.2 v4 M126.23 5.2 v4 M132.30 5.2 v4 M138.37 5.2 v4 M144.44 5.2 v4 M150.51 5.2 v4 M156.58 5.2 v4 M162.65 5.2 v4 M168.72 5.2 v4 M174.79 5.2 v4 M180.86 5.2 v4 M186.93 5.2 v4 M193.00 5.2 v4 M199.07 5.2 v4 M205.14 5.2 v4 M211.21 5.2 v4 M217.28 5.2 v4 M223.35 5.2 v4 M229.42 5.2 v4 M235.49 5.2 v4 M241.56 5.2 v4 M247.63 5.2 v4 M253.70 5.2 v4 M259.77 5.2 v4 " stroke="#cdb3bf" stroke-width="1"/><path d="M135.6 21.8 v-7.4 l4 -3.4 l4 3.4 v7.4 z" fill="#0a6fe0"/></svg>
<div class="a" style="left:1126.7px;top:820.1px;width:96.7px;height:41.3px;background:#f6f4f4;border-radius:3px;"></div>
<div class="a" style="left:1128.8px;top:822.1px;width:92.2px;height:37.3px;background:#ff9db6;"></div>
<div class="t" style="left:781.06px;top:736.77px;font-size:11.5px;font-weight:bold;color:#15297c;transform:scaleX(1.0361);">DAMIT</div>
<div class="t" style="left:829.68px;top:736.57px;font-size:11.5px;font-weight:bold;transform:scaleX(0.9200);">1</div>
<div class="t" style="left:848.00px;top:736.57px;font-size:11.5px;transform:scaleX(1.0333);">2</div>
<div class="t" style="left:865.80px;top:736.73px;font-size:11.3px;color:#b4b4b4;transform:scaleX(0.9333);">3</div>
<div class="t" style="left:883.50px;top:736.73px;font-size:11.3px;color:#b4b4b4;transform:scaleX(1.0167);">4</div>
<div class="t" style="left:900.54px;top:736.73px;font-size:11.3px;color:#b4b4b4;transform:scaleX(1.1600);">5</div>
<div class="t" style="left:919.90px;top:736.73px;font-size:11.3px;color:#b4b4b4;transform:scaleX(0.9833);">6</div>
<div class="t" style="left:941.47px;top:737.37px;font-size:11.5px;color:#101830;transform:scaleX(0.9328);">Light curves</div>
<div class="t" style="left:1013.34px;top:736.77px;font-size:11.5px;font-weight:bold;color:#15297c;transform:scaleX(1.0593);">ISAM</div>
<div class="t" style="left:1054.04px;top:737.43px;font-size:11.3px;color:#bcbcbc;transform:scaleX(0.7600);">1</div>
<div class="t" style="left:1077.70px;top:737.43px;font-size:11.3px;color:#bcbcbc;transform:scaleX(0.9833);">2</div>
<div class="t" style="left:1102.00px;top:737.43px;font-size:11.3px;color:#bcbcbc;transform:scaleX(0.9500);">3</div>
<div class="t" style="left:1126.00px;top:737.43px;font-size:11.3px;color:#bcbcbc;transform:scaleX(1.0333);">4</div>
<div class="t" style="left:1149.04px;top:737.43px;font-size:11.3px;color:#bcbcbc;transform:scaleX(1.1600);">5</div>
<div class="t" style="left:1173.90px;top:737.43px;font-size:11.3px;color:#bcbcbc;transform:scaleX(0.9833);">6</div>
<div class="t" style="left:1197.17px;top:735.67px;font-size:11.5px;font-weight:bold;color:#f4f400;transform:scaleX(1.0333);">?</div>
<div class="t" style="left:1213.60px;top:735.67px;font-size:11.5px;font-weight:bold;color:#fff;transform:scaleX(0.9750);">X</div>
<div class="t" style="left:786.78px;top:754.27px;font-size:11.5px;color:#1c3f8e;transform:scaleX(0.9229);">Source</div>
<div class="t" style="left:846.31px;top:754.27px;font-size:11.5px;color:#1c3f8e;transform:scaleX(0.8900);">ID</div>
<div class="t" style="left:880.01px;top:754.27px;font-size:11.5px;color:#1c3f8e;transform:scaleX(0.8857);">Surf./Vol</div>
<div class="t" style="left:943.92px;top:755.07px;font-size:11.5px;transform:scaleX(0.8833);">Fit quality</div>
<div class="t" style="left:1021.91px;top:755.07px;font-size:11.5px;transform:scaleX(0.8932);">Ph Corrn</div>
<div class="t" style="left:1072.92px;top:755.17px;font-size:11.5px;transform:scaleX(0.8766);">Minimum dia</div>
<div class="t" style="left:1148.91px;top:754.77px;font-size:11.5px;transform:scaleX(0.8866);">Maximum dia</div>
<div class="t" style="left:786.81px;top:771.27px;font-size:11.5px;color:#16163c;transform:scaleX(0.8914);">DAMIT</div>
<div class="t" style="left:827.64px;top:771.27px;font-size:11.5px;color:#16163c;transform:scaleX(0.9625);">1988</div>
<div class="t" style="left:883.19px;top:771.27px;font-size:11.5px;color:#16163c;transform:scaleX(0.9071);">1.057</div>
<div class="t" style="left:925.58px;top:772.07px;font-size:11.5px;transform:scaleX(0.9244);">Not fitted</div>
<div class="t" style="left:1026.80px;top:772.07px;font-size:11.5px;color:#202040;transform:scaleX(0.8909);">0°</div>
<div class="t" style="left:1116.58px;top:772.67px;font-size:11.5px;transform:scaleX(0.9250);">Set</div>
<div class="t" style="left:1194.49px;top:772.67px;font-size:11.5px;transform:scaleX(0.9125);">Set</div>
<div class="t" style="left:788.81px;top:790.54px;font-size:12px;font-weight:bold;transform:scaleX(0.9889);">Dia</div>
<div class="t" style="left:819.11px;top:788.58px;font-size:11.6px;font-style:italic;color:#2545a4;transform:scaleX(0.8889);">Values in memory =&gt;</div>
<div class="t" style="left:924.78px;top:789.87px;font-size:11.5px;color:#5a08b8;transform:scaleX(0.9178);">Not fitted</div>
<div class="t" style="left:1026.80px;top:788.87px;font-size:11.5px;color:#5a08b8;transform:scaleX(0.8909);">0°</div>
<div class="t" style="left:921.20px;top:807.00px;font-size:10.4px;font-weight:bold;transform:scaleX(1.1391);">The SM fit has not been considered</div>
<div class="t" style="left:787.00px;top:822.27px;font-size:11.5px;color:#1c3f8e;transform:scaleX(0.9000);">Version info</div>
<div class="t" style="left:850.10px;top:823.07px;font-size:11.5px;transform:scaleX(0.9134);">2018-07-18, Q=1.5</div>
<div class="t" style="left:785.59px;top:842.47px;font-size:11.5px;color:#1c3f8e;transform:scaleX(0.9098);">Image scale</div>
<div class="t" style="left:1136.13px;top:828.94px;font-size:12px;font-weight:bold;color:#e4001c;transform:scaleX(1.0667);">Save/update</div>
<div class="t" style="left:1139.78px;top:841.04px;font-size:12px;font-weight:bold;color:#e4001c;transform:scaleX(1.0188);">model 1988</div>
<!--DM-END-->

</body>
</html>
